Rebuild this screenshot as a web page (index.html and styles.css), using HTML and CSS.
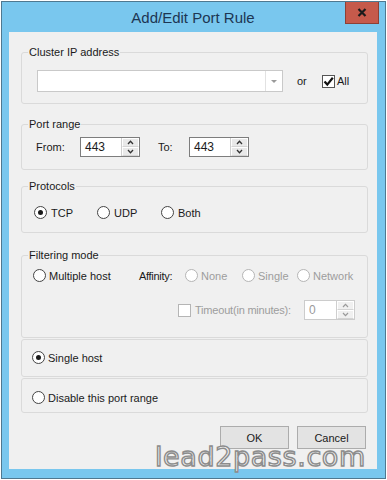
FILE: index.html
```html
<!DOCTYPE html>
<html lang="en">
<head>
    <meta charset="UTF-8">
    <meta name="viewport" content="width=device-width, initial-scale=1.0">
    <title>Add/Edit Port Rule</title>
    <link rel="stylesheet" href="styles.css">
</head>
<body>
    <div class="window">
        <div class="titlebar">
            <span></span>
            <h1 class="title">Add/Edit Port Rule</h1>
            <div class="close">
                <svg width="10" height="9" viewBox="0 0 10 9"><path d="M1.5 1 L8.5 8 M8.5 1 L1.5 8" stroke="#1b1b1b" stroke-width="2.2"/></svg>
            </div>
        </div>

        <div class="client">
            <fieldset class="group group-ip">
                <legend>Cluster IP address</legend>
                <div class="row">
                    <div class="combo">
                        <span class="combo-arrow"></span>
                    </div>
                    <span class="or">or</span>
                    <span class="check">
                        <svg width="11" height="11" viewBox="0 0 11 11"><path d="M1.5 5.5 L4.3 8.6 L9.8 1.8" fill="none" stroke="#111" stroke-width="2.2"/></svg>
                    </span>
                    <span class="all">All</span>
                </div>
            </fieldset>

            <fieldset class="group group-port">
                <legend>Port range</legend>
                <div class="row">
                    <span class="lbl-from">From:</span>
                    <div class="spin spin-port">
                        <span class="spin-value">443</span>
                        <div class="spin-btns">
                            <span class="spin-btn"><svg width="7" height="5" viewBox="0 0 7 5"><path d="M1 4 L3.5 1.3 L6 4" fill="none" stroke="#333" stroke-width="1.3"/></svg></span>
                            <span class="spin-btn"><svg width="7" height="5" viewBox="0 0 7 5"><path d="M1 1 L3.5 3.7 L6 1" fill="none" stroke="#333" stroke-width="1.3"/></svg></span>
                        </div>
                    </div>
                    <span class="lbl-to">To:</span>
                    <div class="spin spin-port">
                        <span class="spin-value">443</span>
                        <div class="spin-btns">
                            <span class="spin-btn"><svg width="7" height="5" viewBox="0 0 7 5"><path d="M1 4 L3.5 1.3 L6 4" fill="none" stroke="#333" stroke-width="1.3"/></svg></span>
                            <span class="spin-btn"><svg width="7" height="5" viewBox="0 0 7 5"><path d="M1 1 L3.5 3.7 L6 1" fill="none" stroke="#333" stroke-width="1.3"/></svg></span>
                        </div>
                    </div>
                </div>
            </fieldset>

            <fieldset class="group group-proto">
                <legend>Protocols</legend>
                <div class="row">
                    <label class="opt opt-tcp"><span class="radio on"></span>TCP</label>
                    <label class="opt opt-udp"><span class="radio"></span>UDP</label>
                    <label class="opt"><span class="radio"></span>Both</label>
                </div>
            </fieldset>

            <fieldset class="group group-filter">
                <legend>Filtering mode</legend>
                <div class="row">
                    <label class="opt opt-multi"><span class="radio"></span>Multiple host</label>
                    <span class="affinity">Affinity:</span>
                    <label class="opt opt-none off"><span class="radio"></span>None</label>
                    <label class="opt opt-single off"><span class="radio"></span>Single</label>
                    <label class="opt off"><span class="radio"></span>Network</label>
                </div>
                <div class="row row-timeout">
                    <span class="check off"></span>
                    <span class="timeout off">Timeout(in minutes):</span>
                    <div class="spin spin-off">
                        <span class="spin-value">0</span>
                        <div class="spin-btns">
                            <span class="spin-btn"><svg width="7" height="5" viewBox="0 0 7 5"><path d="M1 4 L3.5 1.3 L6 4" fill="none" stroke="#9a9a9a" stroke-width="1.2"/></svg></span>
                            <span class="spin-btn"><svg width="7" height="5" viewBox="0 0 7 5"><path d="M1 1 L3.5 3.7 L6 1" fill="none" stroke="#9a9a9a" stroke-width="1.2"/></svg></span>
                        </div>
                    </div>
                </div>
            </fieldset>

            <fieldset class="group group-single">
                <div class="row">
                    <label class="opt"><span class="radio on"></span>Single host</label>
                </div>
            </fieldset>

            <fieldset class="group group-disable">
                <div class="row">
                    <label class="opt"><span class="radio"></span>Disable this port range</label>
                </div>
            </fieldset>

            <div class="buttons">
                <button class="btn">OK</button>
                <button class="btn">Cancel</button>
            </div>
        </div>

        <div class="watermark">lead2pass.com</div>
    </div>
</body>
</html>
```

FILE: styles.css
```css
* {
    box-sizing: border-box;
}

body {
    margin: 0;
    padding: 1px;
    background-color: #ffffff;
    font-family: "Liberation Sans", Arial, sans-serif;
    font-size: 11px;
    color: #1a1a1a;
}

.window {
    position: relative;
    width: 385px;
    height: 478px;
    border: 1px solid #4f7890;
    background-color: #79c7ee;
    display: flex;
    flex-direction: column;
    padding: 0 8px 9px 7px;
}

/* title bar */
.titlebar {
    height: 30px;
    display: grid;
    grid-template-columns: 1fr auto 1fr;
}

.title {
    margin: 0;
    align-self: center;
    font-size: 15px;
    font-weight: normal;
    color: #1d3653;
    padding-top: 1px;
}

.close {
    justify-self: end;
    margin-right: -2px;
    width: 34px;
    height: 22px;
    background-color: #c65a4b;
    border: 1px solid #8d4035;
    border-top: none;
    display: flex;
    align-items: center;
    justify-content: center;
}

/* dialog body */
.client {
    flex: 1;
    background-color: #f0f0f0;
    display: flex;
    flex-direction: column;
}

.group {
    margin: 0 9px 0 12px;
    padding: 0 6px;
    border: 1px solid #dadada;
    border-radius: 3px;
    min-width: 0;
}

.group legend {
    padding: 0 1px;
    line-height: 14px;
}

.row {
    display: flex;
    align-items: center;
}

.group-ip {
    margin-top: 13px;
    padding-top: 11px;
    padding-bottom: 11px;
}

.group-port {
    margin-top: 13px;
    padding-top: 6px;
    padding-bottom: 12px;
}

.group-proto {
    margin-top: 9px;
    padding-top: 13px;
    padding-bottom: 13px;
}

.group-filter {
    margin-top: 15px;
    padding-top: 7px;
    padding-bottom: 17px;
}

.group-single {
    margin-top: 1px;
    padding-top: 11px;
    padding-bottom: 12px;
}

.group-disable {
    margin-top: 1px;
    padding-top: 12px;
    padding-bottom: 8px;
}

/* combo box */
.combo {
    position: relative;
    margin-left: 9px;
    width: 246px;
    height: 22px;
    background-color: #ffffff;
    border: 1px solid #c9c9c9;
}

.combo-arrow {
    position: absolute;
    top: 0;
    right: 0;
    width: 17px;
    height: 20px;
    border-left: 1px solid #e2e2e2;
}

.combo-arrow::after {
    content: "";
    position: absolute;
    left: 5px;
    top: 9px;
    border-left: 3px solid transparent;
    border-right: 3px solid transparent;
    border-top: 3px solid #9a9a9a;
}

.or {
    margin-left: 14px;
    width: 25px;
}

.check {
    flex: none;
    width: 13px;
    height: 13px;
    border: 1px solid #555555;
    background-color: #ffffff;
    display: flex;
    align-items: center;
    justify-content: center;
}

.all {
    margin-left: 2px;
}

/* spin boxes */
.lbl-from {
    margin-left: 8px;
    width: 44px;
}

.lbl-to {
    margin-left: 18px;
    width: 31px;
}

.spin {
    flex: none;
    height: 20px;
    display: flex;
    border: 1px solid #7d7d7d;
    background-color: #ffffff;
}

.spin-port {
    width: 60px;
}

.spin-value {
    flex: 1;
    padding-left: 4px;
    line-height: 18px;
    font-size: 12px;
}

.spin-btns {
    width: 18px;
    display: flex;
    flex-direction: column;
    border-left: 1px solid #cfcfcf;
}

.spin-btn {
    flex: 1;
    background-color: #e9e9e9;
    border: 1px solid #ffffff;
    border-bottom-color: #d4d4d4;
    display: flex;
    align-items: center;
    justify-content: center;
}

.spin-off {
    width: 51px;
    border-color: #cccccc;
}

.spin-off .spin-value {
    color: #9a9a9a;
}

.spin-off .spin-btn {
    background-color: #f0f0f0;
}

/* radios */
.opt {
    display: flex;
    align-items: center;
    gap: 4px;
    white-space: nowrap;
}

.radio {
    flex: none;
    width: 13px;
    height: 13px;
    border: 1px solid #444444;
    border-radius: 50%;
    background-color: #ffffff;
    display: flex;
    align-items: center;
    justify-content: center;
}

.radio.on::after {
    content: "";
    width: 5px;
    height: 5px;
    border-radius: 50%;
    background-color: #1a1a1a;
}

.opt-tcp {
    margin-left: 6px;
    width: 63px;
}

.opt-udp {
    width: 64px;
}

.group-filter .opt,
.group-single .opt,
.group-disable .opt {
    gap: 3px;
}

.opt-multi {
    margin-left: 5px;
    width: 106px;
    gap: 5px;
}

.affinity {
    width: 46px;
    letter-spacing: -0.3px;
}

.opt-none {
    width: 57px;
}

.opt-single {
    width: 55px;
}

.off {
    color: #9d9d9d;
}

.off .radio,
.check.off {
    border-color: #b5b5b5;
}

.row-timeout {
    margin-top: 18px;
}

.check.off {
    margin-left: 150px;
}

.timeout {
    margin-left: 4px;
    width: 109px;
    letter-spacing: -0.2px;
}

.group-single .opt,
.group-disable .opt {
    margin-left: 4px;
}

/* buttons */
.buttons {
    margin-top: 13px;
    padding-right: 11px;
    display: flex;
    justify-content: flex-end;
    gap: 8px;
}

.btn {
    width: 69px;
    height: 23px;
    background-color: #e3e3e3;
    border: 1px solid #acacac;
    font-family: "Liberation Sans", Arial, sans-serif;
    font-size: 11px;
    color: #1a1a1a;
    padding: 0;
}

.watermark {
    position: absolute;
    left: 153px;
    top: 441px;
    font-family: "DejaVu Sans", sans-serif;
    font-size: 27px;
    line-height: 1;
    letter-spacing: 0.6px;
    color: #f4f4f4;
    -webkit-text-stroke: 1.4px #8c8c8c;
}
```
